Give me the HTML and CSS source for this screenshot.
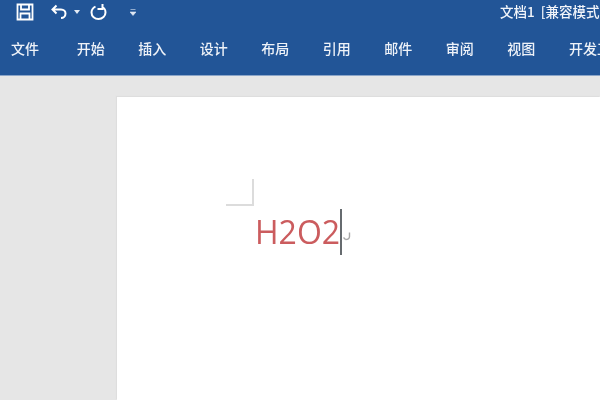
FILE: index.html
```html
<!DOCTYPE html>
<html lang="zh">
<head>
<meta charset="utf-8">
<title>文档1 [兼容模式]</title>
<link rel="stylesheet" href="styles.css">
</head>
<body>
<header class="ribbon">
  <div class="titlebar">
    <div class="qat">
      <svg class="icon save" viewBox="0 0 18 18" width="18" height="18"><path d="M1.500 1.500H16.500V16.500H1.500Z M5 1.500V6.500H13V1.500 M4.500 16.500V10.500H13.500V16.500" fill="none" stroke="#fff" stroke-width="1.800"/></svg>
      <svg class="icon undo" viewBox="0 0 18 16" width="18" height="16"><path d="M6.500 1.500L2.500 5.500L6.500 9.500 M3 5.500H11C14 5.500 15.500 7.500 15.500 9.500C15.500 12 13.500 14 11 14" fill="none" stroke="#fff" stroke-width="2"/></svg>
      <svg class="icon caret" viewBox="0 0 6 4" width="6" height="4"><path d="M0 0H6L3 4Z" fill="#e4ebf5"/></svg>
      <svg class="icon redo" viewBox="0 0 18 18" width="18" height="18"><path d="M5.500 3.500C2.800 5 1.500 7.200 1.500 9.500C1.500 13.500 4.800 16 8.500 16C12.500 16 15.500 13 15.500 9.500C15.500 7 14 4.800 12 3.500 M12.500 1V6H7.500" fill="none" stroke="#fff" stroke-width="2"/></svg>
      <svg class="icon more" viewBox="0 0 6 7" width="6" height="7"><path d="M0.500 0.500H5.500M0 3H6L3 6.500Z" fill="#dfe7f3" stroke="#dfe7f3" stroke-width="0.600"/></svg>
    </div>
    <div class="doc-title">文档1 [兼容模式]</div>
  </div>
  <nav class="tabs">
    <span class="tab first">文件</span>
    <span class="tab">开始</span>
    <span class="tab">插入</span>
    <span class="tab">设计</span>
    <span class="tab">布局</span>
    <span class="tab">引用</span>
    <span class="tab">邮件</span>
    <span class="tab">审阅</span>
    <span class="tab">视图</span>
    <span class="tab last">开发工具</span>
  </nav>
</header>
<main class="workspace">
  <section class="page">
    <div class="crop-mark"></div>
    <p class="line"><span class="formula">H2O2</span><span class="caret-bar"></span><svg class="para" viewBox="0 0 9 9" width="9" height="9"><path d="M7.500 0.500V4.500C7.500 6.500 5.500 7.500 3.500 7.500M3.500 7.500L1.500 5.500" fill="none" stroke="#a8a8a8" stroke-width="1.400"/></svg></p>
  </section>
</main>
</body>
</html>
```

FILE: styles.css
```css
html, body {
  margin: 0;
  padding: 0;
}
body {
  width: 600px;
  height: 400px;
  overflow: hidden;
  display: flex;
  flex-direction: column;
  background: #e6e6e6;
  font-family: "Noto Sans CJK SC", "Open Sans", sans-serif;
}
.ribbon {
  height: 76px;
  flex: none;
  background: #225597;
  border-bottom: 1px solid #8ba5c8;
  box-sizing: border-box;
  color: #eef2f8;
}
.titlebar {
  height: 34px;
  display: flex;
  align-items: center;
  justify-content: space-between;
  filter: blur(0.7px);
  overflow: hidden;
}
.qat {
  display: flex;
  align-items: center;
  padding: 0 0 10px 16px;
  height: 24px;
}
.save { margin-right: 16px; }
.undo { margin-right: 6px; }
.caret { margin-right: 10px; }
.redo { margin-right: 22px; }
.doc-title {
  flex: none;
  width: 100px;
  padding-bottom: 12px;
  font-size: 13.500px;
  font-weight: 500;
  line-height: 22px;
  word-spacing: 3px;
  white-space: nowrap;
  overflow: hidden;
  color: #f2f5fa;
}
.tabs {
  display: flex;
  height: 28px;
  align-items: center;
  filter: blur(0.75px);
  white-space: nowrap;
  overflow: hidden;
  padding-left: 60px;
}
.tab {
  flex: none;
  width: 61.500px;
  text-align: center;
  font-size: 14px;
  font-weight: 500;
  line-height: 28px;
}
.tab.first {
  margin-left: -60px;
  width: 50px;
  margin-right: 10px;
}
.tab.last {
  width: auto;
  padding-left: 17px;
}
.workspace {
  flex: 1;
  min-height: 0;
  padding: 21px 0 0 117px;
}
.page {
  height: 100%;
  background: #fff;
  box-shadow: -1px -1px 1px #dedede;
  padding: 82px 0 0 95px;
  box-sizing: border-box;
}
.crop-mark {
  width: 28px;
  height: 27px;
  margin-left: 14px;
  margin-bottom: 3px;
  box-sizing: border-box;
  border-right: 2px solid #dcdcdc;
  border-bottom: 2px solid #dcdcdc;
  filter: blur(0.5px);
}
.line {
  margin: 0;
  padding-left: 43px;
  height: 46px;
  display: flex;
  align-items: center;
}
.formula {
  font-family: "Open Sans", sans-serif;
  font-size: 32px;
  line-height: 46px;
  color: #cb5c5e;
  filter: blur(0.5px);
}
.caret-bar {
  width: 2px;
  height: 46px;
  background: #666b6f;
  filter: blur(0.4px);
}
.para {
  margin: 8px 0 0 0;
  filter: blur(0.5px);
}
```
